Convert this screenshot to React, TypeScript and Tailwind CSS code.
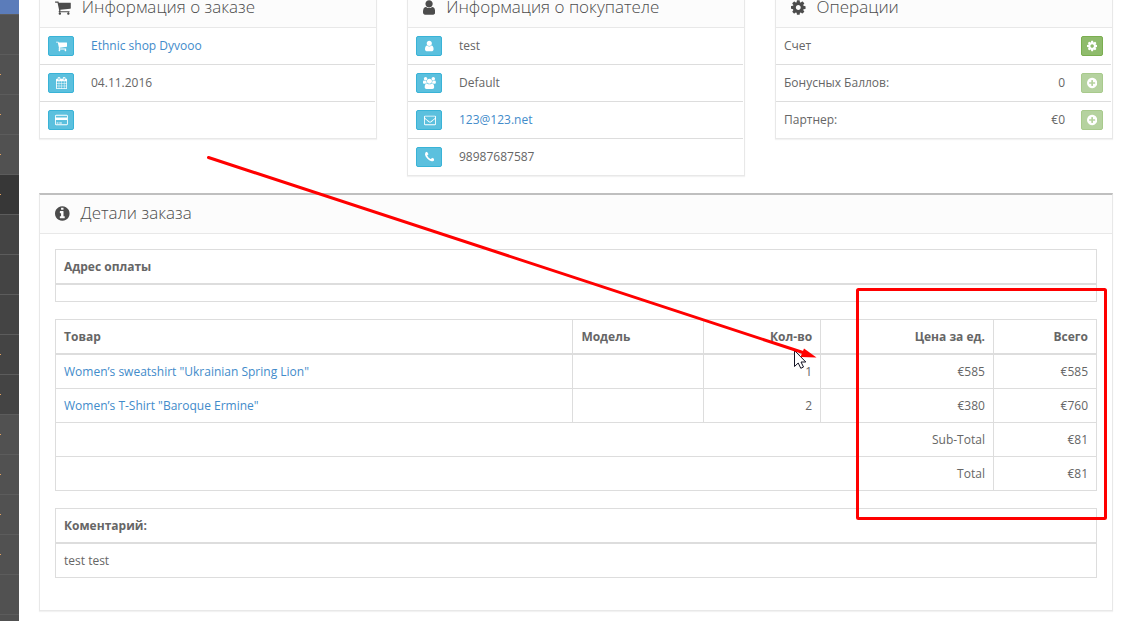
import type { ReactNode } from 'react';

const icons = {
  cart: {
    viewBox: '64 0 1664 1792',
    d: 'M704 1536q0 52-38 90t-90 38-90-38-38-90 38-90 90-38 90 38 38 90zm896 0q0 52-38 90t-90 38-90-38-38-90 38-90 90-38 90 38 38 90zm128-1088v512q0 24-16.5 42.5t-40.5 21.5l-1044 122q13 60 13 70 0 16-24 64h920q26 0 45 19t19 45-19 45-45 19h-1024q-26 0-45-19t-19-45q0-11 8-31.5t16-36 21.5-40 15.5-29.5l-177-823h-204q-26 0-45-19t-19-45 19-45 45-19h256q16 0 28.5 6.5t19.5 15.5 13 24.5 8 26 5.5 29.5 4.5 26h1201q26 0 45 19t19 45z',
  },
  user: {
    viewBox: '256 0 1280 1792',
    d: 'M1536 1399q0 109-62.5 187t-150.5 78h-854q-88 0-150.5-78t-62.5-187q0-85 8.5-160.5t31.5-152 58.5-131 94-89 134.5-34.5q131 128 313 128t313-128q76 0 134.5 34.5t94 89 58.5 131 31.5 152 8.5 160.5zm-256-887q0 159-112.5 271.5t-271.5 112.5-271.5-112.5-112.5-271.5 112.5-271.5 271.5-112.5 271.5 112.5 112.5 271.5z',
  },
  cog: {
    viewBox: '128 0 1536 1792',
    d: 'M1152 896q0-106-75-181t-181-75-181 75-75 181 75 181 181 75 181-75 75-181zm512-109v222q0 12-8 23t-20 13l-185 28q-19 54-39 91 35 50 107 138 10 12 10 25t-9 23q-27 37-99 108t-94 71q-12 0-26-9l-138-108q-44 23-91 38-16 136-29 186-7 28-36 28h-222q-14 0-24.5-8.5t-11.5-21.5l-28-184q-49-16-90-37l-141 107q-10 9-25 9-14 0-25-11-126-114-165-168-7-10-7-23 0-12 8-23 15-21 51-66.5t54-70.5q-27-50-41-99l-183-27q-13-2-21-12.5t-8-23.5v-222q0-12 8-23t19-13l186-28q14-46 39-92-40-57-107-138-10-12-10-24 0-10 9-23 26-36 98.5-107.5t94.5-71.5q13 0 26 10l138 107q44-23 91-38 16-136 29-186 7-28 36-28h222q14 0 24.5 8.5t11.5 21.5l28 184q49 16 90 37l142-107q9-9 24-9 13 0 25 10 129 119 165 170 7 8 7 22 0 12-8 23-15 21-51 66.5t-54 70.5q26 50 41 98l183 28q13 2 21 12.5t8 23.5z',
  },
  info: {
    viewBox: '128 0 1536 1792',
    d: 'M1152 1376v-160q0-14-9-23t-23-9h-96v-512q0-14-9-23t-23-9h-320q-14 0-23 9t-9 23v160q0 14 9 23t23 9h96v320h-96q-14 0-23 9t-9 23v160q0 14 9 23t23 9h448q14 0 23-9t9-23zm-128-896v-160q0-14-9-23t-23-9h-192q-14 0-23 9t-9 23v160q0 14 9 23t23 9h192q14 0 23-9t9-23zm640 416q0 209-103 385.5t-279.5 279.5-385.5 103-385.5-103-279.5-279.5-103-385.5 103-385.5 279.5-279.5 385.5-103 385.5 103 279.5 279.5 103 385.5z',
  },
  plus: {
    viewBox: '128 0 1536 1792',
    d: 'M1344 960v-128q0-26-19-45t-45-19h-256v-256q0-26-19-45t-45-19h-128q-26 0-45 19t-19 45v256h-256q-26 0-45 19t-19 45v128q0 26 19 45t45 19h256v256q0 26 19 45t45 19h128q26 0 45-19t19-45v-256h256q26 0 45-19t19-45zm320-64q0 209-103 385.5t-279.5 279.5-385.5 103-385.5-103-279.5-279.5-103-385.5 103-385.5 279.5-279.5 385.5-103 385.5 103 279.5 279.5 103 385.5z',
  },
  phone: {
    viewBox: '192 0 1408 1792',
    d: 'M1600 1240q0 27-10 70.5t-21 68.5q-21 50-122 106-94 51-186 51-27 0-53-3.5t-57.5-12.5-47-14.5-55.5-20.5-49-18q-98-35-175-83-127-79-264-216t-216-264q-48-77-83-175-3-9-18-49t-20.5-55.5-14.5-47-12.5-57.5-3.5-53q0-92 51-186 56-101 106-122 25-11 68.5-21t70.5-10q14 0 21 3 18 6 53 76 11 19 30 54t35 63.5 31 53.5q3 4 17.5 25t21.5 35.5 7 28.5q0 20-28.5 50t-62 55-62 53-28.5 46q0 9 5 22.5t8.5 20.5 14 24 11.5 19q76 137 174 235t235 174q2 1 19 11.5t24 14 20.5 8.5 22.5 5q18 0 46-28.5t53-62 55-62 50-28.5q14 0 28.5 7t35.5 21.5 25 17.5q25 15 53.5 31t63.5 35 54 30q70 35 76 53 3 7 3 21z',
  },
  envelope: {
    viewBox: '0 0 1792 1792',
    d: 'M1664 1504v-768q-32 36-69 66-268 206-426 338-51 43-83 67t-86.5 48.5-102.5 24.5h-2q-48 0-102.5-24.5t-86.5-48.5-83-67q-158-132-426-338-37-30-69-66v768q0 13 9.5 22.5t22.5 9.5h1472q13 0 22.5-9.5t9.5-22.5zm0-1051v-24.5l-.5-13-3-12.5-5.5-9-9-7.5-14-2.5h-1472q-13 0-22.5 9.5t-9.5 22.5q0 168 147 284 193 152 401 317 6 5 35 29.5t46 37.5 44.5 31.5 50.5 27.5 43 9h2q20 0 43-9t50.5-27.5 44.5-31.5 46-37.5 35-29.5q208-165 401-317 54-43 100.5-115.5t46.5-131.5zm128-37v1088q0 66-47 113t-113 47h-1472q-66 0-113-47t-47-113v-1088q0-66 47-113t113-47h1472q66 0 113 47t47 113z',
  },
  group: {
    viewBox: '64 0 1920 1792',
    d: 'M657 896q-162 5-265 128h-134q-82 0-138-40.5t-62-118.5q0-353 124-353 6 0 43.5 21t97.5 42.5 119 21.5q67 0 133-23-5 37-5 66 0 159 93 256zm1071 637q0 120-73 189.5t-194 69.5h-874q-121 0-194-69.5t-73-189.5q0-53 3.5-103.5t14-109 26.5-108.5 43-97.5 62-81 85.5-53.5 111.5-20q10 0 43 21.5t73 48 107 48 135 21.5 135-21.5 107-48 73-48 43-21.5q61 0 111.5 20t85.5 53.5 62 81 43 97.5 26.5 108.5 14 109 3.5 103.5zm-1024-1277q0 106-75 181t-181 75-181-75-75-181 75-181 181-75 181 75 75 181zm704 384q0 159-112.5 271.5t-271.5 112.5-271.5-112.5-112.5-271.5 112.5-271.5 271.5-112.5 271.5 112.5 112.5 271.5zm576 225q0 78-62 118.5t-138 40.5h-134q-103-123-265-128 93-97 93-256 0-29-5-66 66 23 133 23 59 0 119-21.5t97.5-42.5 43.5-21q124 0 124 353zm-128-609q0 106-75 181t-181 75-181-75-75-181 75-181 181-75 181 75 75 181z',
  },
  calendar: {
    viewBox: '64 0 1664 1792',
    d: 'M192 1664h288v-288h-288v288zm352 0h320v-288h-320v288zm-352-352h288v-320h-288v320zm352 0h320v-320h-320v320zm-352-384h288v-288h-288v288zm736 736h320v-288h-320v288zm-384-736h320v-288h-320v288zm768 736h288v-288h-288v288zm-384-352h320v-320h-320v320zm-352-864v-288q0-13-9.5-22.5t-22.5-9.5h-64q-13 0-22.5 9.5t-9.5 22.5v288q0 13 9.5 22.5t22.5 9.5h64q13 0 22.5-9.5t9.5-22.5zm736 864h288v-320h-288v320zm-384-384h320v-288h-320v288zm384 0h288v-288h-288v288zm32-480v-288q0-13-9.5-22.5t-22.5-9.5h-64q-13 0-22.5 9.5t-9.5 22.5v288q0 13 9.5 22.5t22.5 9.5h64q13 0 22.5-9.5t9.5-22.5zm384-64v1280q0 52-38 90t-90 38h-1408q-52 0-90-38t-38-90v-1280q0-52 38-90t90-38h128v-96q0-66 47-113t113-47h64q66 0 113 47t47 113v96h384v-96q0-66 47-113t113-47h64q66 0 113 47t47 113v96h128q52 0 90 38t38 90z',
  },
  card: {
    viewBox: '0 0 1920 1792',
    d: 'M1760 128q66 0 113 47t47 113v1216q0 66-47 113t-113 47h-1600q-66 0-113-47t-47-113v-1216q0-66 47-113t113-47h1600zm-1600 128q-13 0-22.5 9.5t-9.5 22.5v224h1664v-224q0-13-9.5-22.5t-22.5-9.5h-1600zm1600 1280q13 0 22.5-9.5t9.5-22.5v-608h-1664v608q0 13 9.5 22.5t22.5 9.5h1600zm-1504-128v-128h256v128h-256zm384 0v-128h384v128h-384z',
  },
};

type IconName = keyof typeof icons;

function Icon({ name, className }: { name: IconName; className: string }) {
  return (
    <svg className={className} viewBox={icons[name].viewBox} fill="currentColor" fillRule="evenodd" aria-hidden="true">
      <path d={icons[name].d} />
    </svg>
  );
}

interface PanelProps {
  icon: IconName;
  title: string;
  children: ReactNode;
}

function Panel({ icon, title, children }: PanelProps) {
  return (
    <section className="border border-t-2 border-[#e8e8e8] border-t-[#bfbfbf] bg-white shadow-[0_1px_1px_rgba(0,0,0,0.05)]">
      <div className="flex h-[39px] items-center gap-[11px] border-b border-[#e8e8e8] bg-[#fcfcfc] px-[15px] pb-[2px] text-[#4c4c4c]">
        <Icon name={icon} className="h-[17px] w-auto" />
        <h3 className="text-[17px] leading-5 font-light">{title}</h3>
      </div>
      {children}
    </section>
  );
}

interface InfoRow {
  icon: IconName;
  label: string;
  text: string;
  href?: string;
}

function InfoTable({ rows }: { rows: InfoRow[] }) {
  return (
    <div className="pr-px">
      <table className="w-full border-separate border-spacing-0">
        <tbody>
          {rows.map((row, index) => (
            <tr key={row.label} className={index > 0 ? '*:border-t *:border-[#ddd]' : ''}>
              <td className="w-[43px] p-2">
                <button
                  type="button"
                  aria-label={row.label}
                  className="flex h-5 w-[26px] items-center justify-center rounded-xs border border-[#39b3d7] bg-[#5bc0de] pl-px text-white"
                >
                  <Icon name={row.icon} className="h-3 w-auto" />
                </button>
              </td>
              <td className="px-2 pt-2 pb-[10px]">
                {row.href ? (
                  <a href={row.href} className="text-[#428bca]">
                    {row.text}
                  </a>
                ) : (
                  row.text
                )}
              </td>
            </tr>
          ))}
        </tbody>
      </table>
    </div>
  );
}

const orderRows: InfoRow[] = [
  { icon: 'cart', label: 'Магазин', text: 'Ethnic shop Dyvooo', href: '#' },
  { icon: 'calendar', label: 'Дата', text: '04.11.2016' },
  { icon: 'card', label: 'Способ оплаты', text: '' },
];

const customerRows: InfoRow[] = [
  { icon: 'user', label: 'Покупатель', text: 'test' },
  { icon: 'group', label: 'Группа', text: 'Default' },
  { icon: 'envelope', label: 'E-Mail', text: '123@123.net', href: '#' },
  { icon: 'phone', label: 'Телефон', text: '98987687587' },
];

const operations: { label: string; value: string; icon: IconName; disabled: boolean }[] = [
  { label: 'Счет', value: '', icon: 'cog', disabled: false },
  { label: 'Бонусных Баллов:', value: '0', icon: 'plus', disabled: true },
  { label: 'Партнер:', value: '€0', icon: 'plus', disabled: true },
];

const products = [
  { name: 'Women’s sweatshirt "Ukrainian Spring Lion"', model: '', quantity: 1, price: '€585', total: '€585' },
  { name: 'Women’s T-Shirt "Baroque Ermine"', model: '', quantity: 2, price: '€380', total: '€760' },
];

const totals = [
  { title: 'Sub-Total', text: '€81' },
  { title: 'Total', text: '€81' },
];

const menu = [
  { bg: 'bg-[#515151]', arrow: false },
  { bg: 'bg-[#515151]', arrow: true },
  { bg: 'bg-[#515151]', arrow: true },
  { bg: 'bg-[#515151]', arrow: true },
  { bg: 'bg-[#373737]', arrow: true },
  { bg: 'bg-[#444444]', arrow: false },
  { bg: 'bg-[#444444]', arrow: false },
  { bg: 'bg-[#444444]', arrow: false },
  { bg: 'bg-[#444444]', arrow: true },
  { bg: 'bg-[#444444]', arrow: true },
  { bg: 'bg-[#515151]', arrow: true },
  { bg: 'bg-[#515151]', arrow: true },
  { bg: 'bg-[#515151]', arrow: true },
  { bg: 'bg-[#515151]', arrow: true },
  { bg: 'bg-[#515151]', arrow: false },
  { bg: 'bg-[#515151]', arrow: false },
];

const tableClass =
  'mb-[17px] w-full table-fixed border-collapse border border-[#ddd] [&_td]:border [&_td]:border-[#ddd] [&_td]:p-2 [&_th]:border [&_th]:border-b-2 [&_th]:border-[#ddd] [&_th]:p-2 [&_th]:font-bold';

export default function App() {
  return (
    <div className="relative flex h-screen overflow-hidden bg-white font-['Open_Sans',sans-serif] text-[12px] leading-[17px] text-[#666]">
      <nav className="w-[19px] shrink-0 overflow-hidden bg-[#515151]">
        <div className="h-[14px] bg-[#5b7cba]" />
        {menu.map((item, index) => (
          <div key={index} className={`flex h-10 items-center border-t border-[#5c5c5c] ${item.bg}`}>
            {item.arrow && <span className="h-px w-px bg-[#e0a060]" />}
          </div>
        ))}
      </nav>

      <main className="-mt-[13px] min-w-0 flex-1 px-5">
        <div className="mb-[17px] grid grid-cols-3 items-start gap-[30px]">
          <Panel icon="cart" title="Информация о заказе">
            <InfoTable rows={orderRows} />
          </Panel>
          <Panel icon="user" title="Информация о покупателе">
            <InfoTable rows={customerRows} />
          </Panel>
          <Panel icon="cog" title="Операции">
            <div className="pr-px">
              <table className="w-full border-separate border-spacing-0">
                <tbody>
                  {operations.map((row, index) => (
                    <tr key={row.label} className={index > 0 ? '*:border-t *:border-[#ddd]' : ''}>
                      <td className="px-2 pt-2 pb-[10px]">{row.label}</td>
                      <td className="px-2 pt-2 pb-[10px] text-right">{row.value}</td>
                      <td className="w-[38px] p-2">
                        <button
                          type="button"
                          aria-label={row.label}
                          disabled={row.disabled}
                          className="flex h-5 w-[22px] items-center justify-center rounded-xs border border-[#7aae50] bg-[#8fbb6c] text-white disabled:opacity-65"
                        >
                          <Icon name={row.icon} className="h-3 w-auto" />
                        </button>
                      </td>
                    </tr>
                  ))}
                </tbody>
              </table>
            </div>
          </Panel>
        </div>

        <Panel icon="info" title="Детали заказа">
          <div className="p-[15px]">
            <table className={tableClass}>
              <thead>
                <tr>
                  <th className="text-left">Адрес оплаты</th>
                </tr>
              </thead>
              <tbody>
                <tr>
                  <td />
                </tr>
              </tbody>
            </table>

            <table className={tableClass}>
              <colgroup>
                <col className="w-[49.7%]" />
                <col className="w-[12.5%]" />
                <col className="w-[11.3%]" />
                <col className="w-[16.6%]" />
                <col className="w-[9.9%]" />
              </colgroup>
              <thead>
                <tr>
                  <th className="text-left">Товар</th>
                  <th className="text-left">Модель</th>
                  <th className="text-right">Кол-во</th>
                  <th className="text-right">Цена за ед.</th>
                  <th className="text-right">Всего</th>
                </tr>
              </thead>
              <tbody>
                {products.map((product) => (
                  <tr key={product.name}>
                    <td>
                      <a href="#" className="text-[#428bca]">
                        {product.name}
                      </a>
                    </td>
                    <td>{product.model}</td>
                    <td className="text-right">{product.quantity}</td>
                    <td className="text-right">{product.price}</td>
                    <td className="text-right">{product.total}</td>
                  </tr>
                ))}
                {totals.map((total) => (
                  <tr key={total.title}>
                    <td colSpan={4} className="text-right">
                      {total.title}
                    </td>
                    <td className="text-right">{total.text}</td>
                  </tr>
                ))}
              </tbody>
            </table>

            <table className={tableClass}>
              <thead>
                <tr>
                  <th className="text-left">Коментарий:</th>
                </tr>
              </thead>
              <tbody>
                <tr>
                  <td>test test</td>
                </tr>
              </tbody>
            </table>
          </div>
        </Panel>
      </main>

      {/* red marks and the mouse pointer drawn over the page */}
      <svg className="pointer-events-none absolute top-0 left-0" width="1133" height="621" viewBox="0 0 1133 621" fill="none" aria-hidden="true">
        <path
          d="M794.500 350.500v16l3.700-3.500 2.600 5.300 2.700-1.300-2.500-5h4.800z"
          fill="#fff"
          stroke="#112"
          strokeWidth="1"
        />
        <path d="M208.500 157.500L806 353.500" stroke="#f00" strokeWidth="3" strokeLinecap="round" />
        <path d="M804 348.500L816.500 357.500L800.500 357z" fill="#f00" />
        <rect x="857.500" y="289.500" width="248" height="229" rx="1" stroke="#f00" strokeWidth="3" />
      </svg>
    </div>
  );
}
